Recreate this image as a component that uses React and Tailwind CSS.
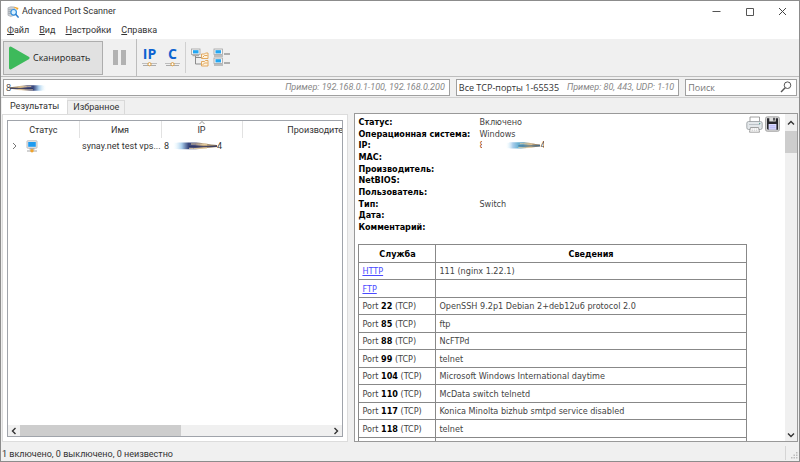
import React, { useState } from 'react';

const menuItems = ['Файл', 'Вид', 'Настройки', 'Справка'];

const details = [
  ['Статус:', 'Включено'],
  ['Операционная система:', 'Windows'],
  ['IP:', null],
  ['MAC:', ''],
  ['Производитель:', ''],
  ['NetBIOS:', ''],
  ['Пользователь:', ''],
  ['Тип:', 'Switch'],
  ['Дата:', ''],
  ['Комментарий:', ''],
];

const services = [
  { link: 'HTTP', info: '111 (nginx 1.22.1)' },
  { link: 'FTP', info: '' },
  { port: 22, info: 'OpenSSH 9.2p1 Debian 2+deb12u6 protocol 2.0' },
  { port: 85, info: 'ftp' },
  { port: 88, info: 'NcFTPd' },
  { port: 99, info: 'telnet' },
  { port: 104, info: 'Microsoft Windows International daytime' },
  { port: 110, info: 'McData switch telnetd' },
  { port: 117, info: 'Konica Minolta bizhub smtpd service disabled' },
  { port: 118, info: 'telnet' },
  { info: '' },
];

// --- Smudge that hides the middle of an address ---
function Smudge({ id, flip, pale, className }) {
  return (
    <svg viewBox="0 0 44 10" preserveAspectRatio="none" className={className} aria-hidden="true">
      <defs>
        <linearGradient id={id}>
          <stop offset="0" stopColor="#7a6a58" />
          <stop offset="0.3" stopColor="#c9ad80" />
          <stop offset="0.5" stopColor={pale ? '#5f9dbb' : '#4a4f7c'} />
          <stop offset="0.65" stopColor={pale ? '#6fb4d4' : '#3a4a80'} />
          <stop offset="0.8" stopColor="#a9cdec" />
          <stop offset="1" stopColor="#e6fbff" stopOpacity="0" />
        </linearGradient>
        <filter id={`${id}-soft`} x="-5%" y="-30%" width="110%" height="160%">
          <feGaussianBlur stdDeviation="0.7 0.5" />
        </filter>
      </defs>
      <g transform={flip ? 'translate(44 0) scale(-1 1)' : undefined} filter={`url(#${id}-soft)`}>
        <path d="M0 4C8 3.500 14 1.500 24 1.500C34 1.500 40 1.500 44 2V8C40 8 24 9 14 7.500L0 6z" fill={`url(#${id})`} />
        <path d="M0 5.200C10 5.800 18 5.500 28 5.500" stroke={pale ? '#3b6b94' : '#2c3260'} strokeWidth="1.300" fill="none" opacity="0.8" />
        <path d="M10 3.800C15 3.300 20 2.800 26 3M10 7C16 7.600 22 7.600 28 7.300" stroke="#ecd2a4" strokeWidth="0.900" fill="none" />
      </g>
    </svg>
  );
}

// --- Icons ---
function AppIcon() {
  return (
    <svg viewBox="0 0 13 13" className="size-3" aria-hidden="true">
      <path d="M1 2L4 .8L8 1V10L4 11.500L1 10z" fill="#c9ced3" stroke="#8b9299" strokeWidth=".5" />
      <path d="M1.500 4h4M1.500 6h3M1.500 8h3" stroke="#868d94" strokeWidth=".6" />
      <path d="M8 1.500L11.500 2.500L10.500 4" stroke="#f0a429" strokeWidth="1.400" fill="none" />
      <circle cx="7.200" cy="6.800" r="3" fill="#d8f0ff" stroke="#2f8fe0" strokeWidth="1.300" />
      <path d="M9.400 9L12 12" stroke="#2f7fd0" strokeWidth="1.700" strokeLinecap="round" />
    </svg>
  );
}

function NetLetter({ children }) {
  return (
    <span className="flex flex-col items-center">
      <span className="h-[13px] font-['Open_Sans'] text-sm leading-3 font-bold text-[#0d63d0]">{children}</span>
      <svg viewBox="0 0 15 6" className="h-[6px] w-[15px]" aria-hidden="true">
        <path d="M0 2.500h15" stroke="#bdbdbd" />
        <path d="M1 4.500h13" stroke="#8d8d8d" strokeWidth=".7" />
        <circle cx="7.500" cy="3.200" r="1.600" fill="#fff" stroke="#d99a3c" />
      </svg>
    </span>
  );
}

function TreeIcon() {
  return (
    <svg viewBox="0 0 18 19" className="h-[19px] w-[18px]" aria-hidden="true">
      <path d="M4.500 8v8h6M4.500 9.500h6" stroke="#8b8b8b" fill="none" />
      <rect x=".5" y="1" width="8.500" height="5.500" fill="#f4f4f4" stroke="#a2a2a2" strokeWidth=".8" />
      <rect x="2" y="2.200" width="5.500" height="3.200" fill="#22a6f2" />
      <path d="M1.500 7.700h6.500" stroke="#9a9a9a" />
      <g fill="#fff3df" stroke="#dfa050" strokeWidth=".9">
        <path d="M10.500 6h3l1-1h2.500v5.500h-6.500z" />
        <path d="M10.500 13.500h3l1-1h2.500v5.500h-6.500z" />
        <path d="M11.500 9.500l2-2h3M11.500 17l2-2h3" fill="none" />
      </g>
    </svg>
  );
}

function FlatListIcon() {
  return (
    <svg viewBox="0 0 18 19" className="h-[19px] w-[18px]" aria-hidden="true">
      {[0, 9].map((y) => (
        <g key={y} transform={`translate(0 ${y})`}>
          <rect x="1" y="1" width="8.500" height="5.500" fill="#f4f4f4" stroke="#a2a2a2" strokeWidth=".8" />
          <rect x="2.500" y="2.200" width="5.500" height="3.200" fill="#22a6f2" />
          <path d="M1 8h9" stroke="#8a8a8a" />
          <path d="M11 6h6" stroke="#8a8a8a" strokeWidth="1.300" />
        </g>
      ))}
    </svg>
  );
}

function HostIcon() {
  return (
    <svg viewBox="0 0 12 13" className="h-[13px] w-3" aria-hidden="true">
      <rect x="1" y=".8" width="10" height="7.400" rx=".6" fill="#eee" stroke="#a5a5a5" strokeWidth=".7" />
      <rect x="2.200" y="2" width="7.600" height="4.800" fill="#1f9bf0" />
      <path d="M3.500 9h5" stroke="#8f8f8f" />
      <path d="M1 11h10" stroke="#a5a5a5" />
      <circle cx="6" cy="10.800" r="1.700" fill="#f0a32c" />
    </svg>
  );
}

function PrinterIcon() {
  return (
    <svg viewBox="0 0 17 17" className="size-[17px]" aria-hidden="true">
      <path d="M4 6V1h9.500v5" fill="#fff" stroke="#8a8a8a" strokeWidth=".8" />
      <rect x=".8" y="5.500" width="15.400" height="8" rx="1.800" fill="#e3e7ea" stroke="#93989c" strokeWidth=".8" />
      <path d="M3 8.500h11" stroke="#b2b9be" strokeWidth=".8" />
      <circle cx="13.700" cy="7.500" r=".7" fill="#4e9e90" />
      <path d="M4.500 11.500h8l1 4.700h-10z" fill="#fff" stroke="#8a8a8a" strokeWidth=".8" />
      <path d="M5.500 13h6M5.500 14.600h6" stroke="#b5b5b5" strokeWidth=".6" strokeDasharray="1.500 .7" />
    </svg>
  );
}

function DiskIcon() {
  return (
    <svg viewBox="0 0 15 16" className="h-4 w-[15px]" aria-hidden="true">
      <rect x=".5" y=".8" width="14" height="14.500" rx="1.800" fill="#d2d2d2" stroke="#999" strokeWidth=".8" />
      <path d="M2 2.200h11v11.600H3L2 12.800z" fill="#26262c" />
      <rect x="4.300" y="1.500" width="6.500" height="4" fill="#dedede" />
      <rect x="8.300" y="1.800" width="1.400" height="2.800" fill="#26262c" />
      <rect x="3.600" y="8" width="7.800" height="5.800" fill="#dcdcff" />
      <path d="M4.500 9.800h6M4.500 11.800h6" stroke="#a5a5f0" strokeWidth=".8" />
    </svg>
  );
}

function Chevron({ d }) {
  return (
    <svg viewBox="0 0 8 8" className="size-2" fill="none" stroke="#333" strokeWidth="1.400" aria-hidden="true">
      <path d={d} />
    </svg>
  );
}

function TitleBar() {
  return (
    <header className="flex h-[21px] shrink-0 items-center bg-white pl-1.5">
      <AppIcon />
      <h1 className="ml-[3px] flex-1 font-['Roboto'] text-[9px] text-[#333]">Advanced Port Scanner</h1>
      <button aria-label="Свернуть" className="flex w-[33px] justify-center">
        <svg viewBox="0 0 9 9" className="size-[9px]" stroke="#555"><path d="M.5 4.500h8" /></svg>
      </button>
      <button aria-label="Развернуть" className="flex w-[33px] justify-center">
        <svg viewBox="0 0 9 9" className="size-[9px]" stroke="#555" fill="none"><path d="M1.500 1.500h7v7h-7z" /></svg>
      </button>
      <button aria-label="Закрыть" className="flex w-[33px] justify-center">
        <svg viewBox="0 0 9 9" className="size-[9px]" stroke="#444"><path d="M1 1l7 7M8 1L1 8" /></svg>
      </button>
    </header>
  );
}

function Toolbar() {
  return (
    <div className="flex h-[38px] shrink-0 items-center border-b border-[#bdbdbd]">
      <button className="ml-0.5 flex h-[34px] w-[100px] items-center border border-[#adadad] bg-[#e1e1e1] pl-1 text-[9px] text-[#222]">
        <svg viewBox="0 0 22 24" className="mr-[3px] h-6 w-[22px]" aria-hidden="true">
          <path d="M2.500 2L20 12L2.500 22z" fill="#3dba5b" stroke="#3dba5b" strokeWidth="3" strokeLinejoin="round" />
        </svg>
        Сканировать
      </button>
      <button aria-label="Пауза" className="ml-2.5 flex gap-[3px] pr-2.5">
        <span className="h-[15px] w-[5px] bg-[#b2b2b2]" />
        <span className="h-[15px] w-[5px] bg-[#b2b2b2]" />
      </button>
      <div className="flex h-full items-center gap-2 border-l border-[#bdbdbd] pl-[5px]">
        <button aria-label="IP"><NetLetter>IP</NetLetter></button>
        <button aria-label="C" className="mr-[5px]"><NetLetter>C</NetLetter></button>
      </div>
      <div className="flex h-[31px] items-center gap-1 border-l border-[#d0d0d0] pl-[5px]">
        <button aria-label="Дерево"><TreeIcon /></button>
        <button aria-label="Список"><FlatListIcon /></button>
      </div>
    </div>
  );
}

function AddressRow() {
  return (
    <div className="grid h-[21px] shrink-0 grid-cols-[4fr_2fr_1fr] gap-1.5 border-b border-[#d0d0d0] px-0.5 py-0.5 text-[9px]">
      <label className="relative flex min-w-0 items-center border border-[#a0a0a0] bg-white px-0.5">
        <input aria-label="Диапазон IP" defaultValue="8" className="min-w-0 flex-1 text-[#444] outline-none" />
        <Smudge id="smudge-range" className="absolute top-1 left-1.5 h-2 w-9" />
        <span className="pt-px pr-0.5 font-['Roboto'] text-[#888] italic">Пример: 192.168.0.1-100, 192.168.0.200</span>
      </label>
      <label className="flex min-w-0 items-center border border-[#a0a0a0] bg-white px-0.5">
        <input aria-label="Порты" defaultValue="Все TCP-порты 1-65535" className="min-w-0 flex-1 text-[#333] outline-none" />
        <span className="pt-px pr-0.5 font-['Roboto'] text-[#888] italic">Пример: 80, 443, UDP: 1-10</span>
      </label>
      <label className="flex min-w-0 items-center border border-[#a0a0a0] bg-white pl-0.5">
        <input aria-label="Поиск" placeholder="Поиск" className="min-w-0 flex-1 outline-none placeholder:text-[#777]" />
        <svg viewBox="0 0 12 12" className="mr-1 size-3" fill="none" stroke="#555" aria-hidden="true">
          <circle cx="7.500" cy="4.200" r="3.300" />
          <path d="M5.200 6.700L1 11" strokeWidth="1.400" />
        </svg>
      </label>
    </div>
  );
}

function ResultsPanel() {
  const [tab, setTab] = useState('Результаты');
  return (
    <section className="flex min-h-0 min-w-0 flex-col">
      <div role="tablist" className="flex h-4 items-end font-['Roboto'] text-[9px] text-[#333]">
        {['Результаты', 'Избранное'].map((name) => (
          <button
            key={name}
            role="tab"
            aria-selected={tab === name}
            onClick={() => setTab(name)}
            className={tab === name ? 'h-4 bg-white px-2 pt-0.5' : 'h-3.5 border border-b-0 border-[#d9d9d9] px-[5px]'}
          >
            {name}
          </button>
        ))}
      </div>
      <div className="flex min-h-0 flex-1 border border-[#dcdcdc] bg-white p-1 pt-[5px]">
        <div className="flex min-w-0 flex-1 flex-col overflow-hidden border border-[#a0a4ab]">
          <div className="min-h-0 flex-1 overflow-hidden">
            <table className="w-[390px] table-fixed font-['Roboto'] text-[9px] leading-4 text-[#333]">
              <thead>
                <tr>
                  <th className="w-[71px] border-r border-[#e2e2e2] p-0 pt-px font-normal">Статус</th>
                  <th className="w-[82px] border-r border-[#e2e2e2] p-0 pt-px font-normal">Имя</th>
                  <th className="relative w-[81px] border-r border-[#e2e2e2] p-0 pt-px font-normal">
                    <svg viewBox="0 0 6 3" className="absolute inset-x-0 top-0 mx-auto h-[3px] w-[6px]" fill="none" stroke="#777" strokeWidth=".8">
                      <path d="M.5 3L3 .5L5.500 3" />
                    </svg>
                    IP
                  </th>
                  <th className="p-0 pt-px font-normal">Производитель</th>
                </tr>
              </thead>
              <tbody>
                <tr>
                  <td>
                    <div className="flex items-center gap-2 pl-1">
                      <svg viewBox="0 0 6 8" className="h-2 w-1.5" fill="none" stroke="#777"><path d="M1 1l3 3l-3 3" /></svg>
                      <HostIcon />
                    </div>
                  </td>
                  <td className="pl-[3px] whitespace-nowrap">synay.net test vps...</td>
                  <td className="pl-[3px]">
                    <div className="flex items-center">
                      8
                      <Smudge id="smudge-list" flip className="ml-1 h-2.5 w-11" />
                      4
                    </div>
                  </td>
                  <td />
                </tr>
              </tbody>
            </table>
          </div>
          <div className="flex h-[11px] shrink-0 items-center bg-[#f0f0f0]">
            <span className="flex w-3 justify-center"><Chevron d="M5.500 1L2.500 4l3 3" /></span>
            <div className="h-full flex-1"><div className="h-full w-[52%] bg-[#cdcdcd]" /></div>
            <span className="flex w-3 justify-center"><Chevron d="M2.500 1l3 3l-3 3" /></span>
          </div>
        </div>
      </div>
    </section>
  );
}

function DetailsPanel() {
  return (
    <section className="mt-[15px] flex min-h-0 min-w-0 border border-[#999] bg-white font-['DejaVu_Sans_Condensed','DejaVu_Sans',sans-serif] text-[9px] text-[#444]">
      <div className="min-w-0 flex-1 overflow-hidden pt-0.5 pl-[3px]">
        <div className="flex justify-between">
          <dl className="grid h-[117px] grid-rows-10">
            {details.map(([name, value]) => (
              <div key={name} className="flex items-center leading-3">
                <dt className="w-[121px] font-bold text-black">{name}</dt>
                <dd className="flex items-center">
                  {value === null ? (
                    <>
                      <span className="w-[3px] overflow-hidden text-[#a0522d]">8</span>
                      <Smudge id="smudge-details" flip pale className="ml-6 h-[9px] w-[34px]" />
                      <span className="w-1 overflow-hidden">4</span>
                    </>
                  ) : value}
                </dd>
              </div>
            ))}
          </dl>
          <div className="flex items-start gap-0.5 pr-[5px]">
            <button aria-label="Печать"><PrinterIcon /></button>
            <button aria-label="Сохранить"><DiskIcon /></button>
          </div>
        </div>
        <table className="mt-[11px] w-[91%] table-fixed border-collapse leading-3">
          <thead>
            <tr className="h-[18px] text-black">
              <th className="w-[77px] border border-[#888] p-0">Служба</th>
              <th className="border border-[#888] p-0">Сведения</th>
            </tr>
          </thead>
          <tbody>
            {services.map((s, i) => (
              <tr key={i} className="h-[18px] odd:h-[17px]">
                <td className="border border-[#888] py-0 pl-[3px]">
                  {s.link && <a href="#" className="text-[#4a4aff] underline">{s.link}</a>}
                  {s.port && <>Port <b className="text-black">{s.port}</b> (TCP)</>}
                </td>
                <td className="border border-[#888] py-0 pl-[3px]">{s.info}</td>
              </tr>
            ))}
          </tbody>
        </table>
      </div>
      <div className="flex w-3 shrink-0 flex-col items-center bg-[#f0f0f0]">
        <span className="flex h-[17px] items-center"><Chevron d="M1 5.500L4 2.500l3 3" /></span>
        <div className="w-full flex-1"><div className="h-[22px] bg-[#cdcdcd]" /></div>
        <span className="flex h-3 items-center"><Chevron d="M1 2.500l3 3l3-3" /></span>
      </div>
    </section>
  );
}

function App() {
  return (
    <div className="flex h-screen flex-col overflow-hidden border border-[#8c8c8c] bg-[#f0f0f0] font-['Open_Sans','Noto_Sans',sans-serif]">
      <TitleBar />
      <nav className="flex h-[17px] shrink-0 items-center gap-2.5 bg-white pl-1.5 font-['Roboto'] text-[9px] text-[#333]">
        {menuItems.map((item) => (
          <button key={item}><u>{item[0]}</u>{item.slice(1)}</button>
        ))}
      </nav>
      <Toolbar />
      <AddressRow />
      <main className="grid min-h-0 flex-1 grid-cols-[346fr_443fr] gap-1.5 px-px">
        <ResultsPanel />
        <DetailsPanel />
      </main>
      <footer className="flex h-[19px] shrink-0 items-end pl-px font-['Roboto'] text-[9px] text-[#333]">
        <span className="flex-1">1 включено, 0 выключено, 0 неизвестно</span>
        <svg viewBox="0 0 14 16" className="h-4 w-3.5" fill="#bbb" aria-hidden="true">
          <path d="M0 1h1v14H0z" fill="#d5d5d5" />
          <path d="M6 12h1.500v1.500H6zM8.500 12H10v1.500H8.500zM11 12h1.500v1.500H11zM8.500 9.500H10V11H8.500zM11 9.500h1.500V11H11zM11 7h1.500v1.500H11z" />
        </svg>
      </footer>
    </div>
  );
}

export default App;
